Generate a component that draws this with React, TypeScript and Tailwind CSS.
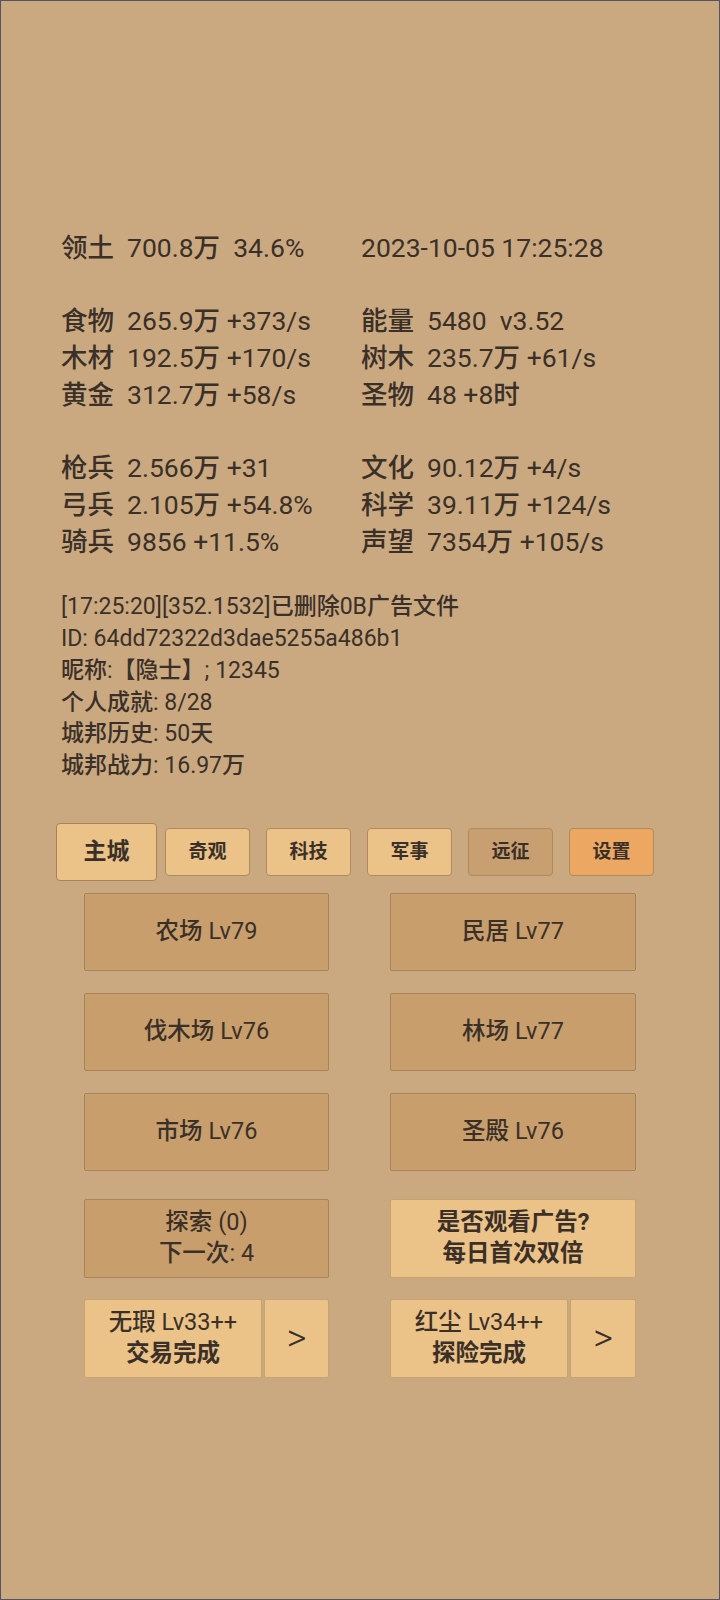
import React from "react";

const font = { fontFamily: "Roboto, 'Noto Sans CJK SC', sans-serif" };

function M({ t, cjk = "font-medium" }: { t: string; cjk?: string }) {
  const parts = t.split(/([\u3000-\u9fff\uff00-\uffef]+)/);
  return (
    <>
      {parts.map((p, i) =>
        /[\u3000-\u9fff\uff00-\uffef]/.test(p) ? (
          <span key={i} className={cjk}>
            {p}
          </span>
        ) : (
          <span key={i}>{p}</span>
        )
      )}
    </>
  );
}

type Row = { l?: [string, string]; r?: [string, string] | string } | null;

const rows: Row[] = [
  { l: ["领土", "700.8万  34.6%"], r: "2023-10-05 17:25:28" },
  null,
  { l: ["食物", "265.9万 +373/s"], r: ["能量", "5480  v3.52"] },
  { l: ["木材", "192.5万 +170/s"], r: ["树木", "235.7万 +61/s"] },
  { l: ["黄金", "312.7万 +58/s"], r: ["圣物", "48 +8时"] },
  null,
  { l: ["枪兵", "2.566万 +31"], r: ["文化", "90.12万 +4/s"] },
  { l: ["弓兵", "2.105万 +54.8%"], r: ["科学", "39.11万 +124/s"] },
  { l: ["骑兵", "9856 +11.5%"], r: ["声望", "7354万 +105/s"] },
];

function Cell({ v }: { v?: [string, string] | string }) {
  if (!v) return <div className="w-[300px]" />;
  if (typeof v === "string")
    return (
      <div className="w-[300px] whitespace-pre">
        <M t={v} />
      </div>
    );
  return (
    <div className="w-[300px] flex whitespace-pre">
      <span className="w-[66px] shrink-0 font-medium">{v[0]}</span>
      <span>
        <M t={v[1]} />
      </span>
    </div>
  );
}

const tabs = ["主城", "奇观", "科技", "军事", "远征", "设置"];

export default function App() {
  return (
    <div
      className="w-[720px] h-[1600px] bg-[#caa981] border border-[#505660] text-[#3a3028] overflow-hidden"
      style={font}
    >
      {/* stats */}
      <div className="pt-[229px] pl-[60px] text-[26.5px] leading-[36.7px]">
        {rows.map((r, i) =>
          r ? (
            <div key={i} className="flex">
              <Cell v={r.l} />
              <Cell v={r.r} />
            </div>
          ) : (
            <div key={i} className="h-[36.7px]" />
          )
        )}
      </div>

      {/* info */}
      <div className="mt-[31px] pl-[60px] text-[23px] leading-[31.75px] whitespace-pre">
        <div>
          <M t="[17:25:20][352.1532]已删除0B广告文件" />
        </div>
        <div>ID: 64dd72322d3dae5255a486b1</div>
        <div>
          <M t="昵称:【隐士】; 12345" />
        </div>
        <div>
          <M t="个人成就: 8/28" />
        </div>
        <div>
          <M t="城邦历史: 50天" />
        </div>
        <div>
          <M t="城邦战力: 16.97万" />
        </div>
      </div>

      {/* tabs */}
      <div className="mt-[41px] ml-[55px] flex h-[58px] items-center">
        {tabs.map((t, i) => (
          <div key={t} className="w-[101px] h-[58px] flex items-center justify-center">
            {i === 0 ? (
              <div className="w-[101px] h-[58px] rounded-[4px] border border-[#a98357] bg-[#ebc288] flex items-center justify-center text-[23px] font-bold">
                {t}
              </div>
            ) : (
              <div
                className={
                  "w-[85px] h-[48px] rounded-[4px] border border-[#b08a5d] flex items-center justify-center text-[19px] font-bold " +
                  (i === 4
                    ? "bg-[#c89f70]"
                    : i === 5
                    ? "bg-[#eca862]"
                    : "bg-[#ebc288]")
                }
              >
                {t}
              </div>
            )}
          </div>
        ))}
      </div>

      {/* buildings */}
      <div className="mt-[12px] ml-[83px] grid grid-cols-[245px_246px] gap-x-[61px] gap-y-[22px] text-[23.5px]">
        {["农场 Lv79", "民居 Lv77", "伐木场 Lv76", "林场 Lv77", "市场 Lv76", "圣殿 Lv76"].map((b) => (
          <div
            key={b}
            className="h-[78px] rounded-[2px] border border-[#a8845b] bg-[#c89e6d] flex items-center justify-center whitespace-pre"
          >
            <M t={b} />
          </div>
        ))}
      </div>

      <div className="mt-[28px] ml-[83px] grid grid-cols-[245px_246px] gap-x-[61px] text-[23.5px] leading-[31.5px]">
        <div className="h-[79px] rounded-[2px] border border-[#a8845b] bg-[#c89e6d] flex flex-col items-center justify-center whitespace-pre">
          <div>
            <M t="探索 (0)" />
          </div>
          <div>
            <M t="下一次: 4" />
          </div>
        </div>
        <div className="h-[79px] rounded-[2px] border border-[#c9a272] bg-[#ebc288] flex flex-col items-center justify-center font-bold">
          <div>是否观看广告?</div>
          <div>每日首次双倍</div>
        </div>
      </div>

      <div className="mt-[21px] ml-[83px] grid grid-cols-[245px_246px] gap-x-[61px] text-[23.5px] leading-[31.5px]">
        {[
          ["无瑕 Lv33++", "交易完成"],
          ["红尘 Lv34++", "探险完成"],
        ].map(([a, b]) => (
          <div key={a} className="flex gap-[2px] h-[79px]">
            <div className="w-[178px] rounded-[2px] border border-[#c9a272] bg-[#ebc288] flex flex-col items-center justify-center whitespace-pre">
              <div>
                <M t={a} />
              </div>
              <div className="font-bold">{b}</div>
            </div>
            <div className="flex-1 rounded-[2px] border border-[#c9a272] bg-[#ebc288] flex items-center justify-center text-[38px] font-light">
              &gt;
            </div>
          </div>
        ))}
      </div>
    </div>
  );
}
